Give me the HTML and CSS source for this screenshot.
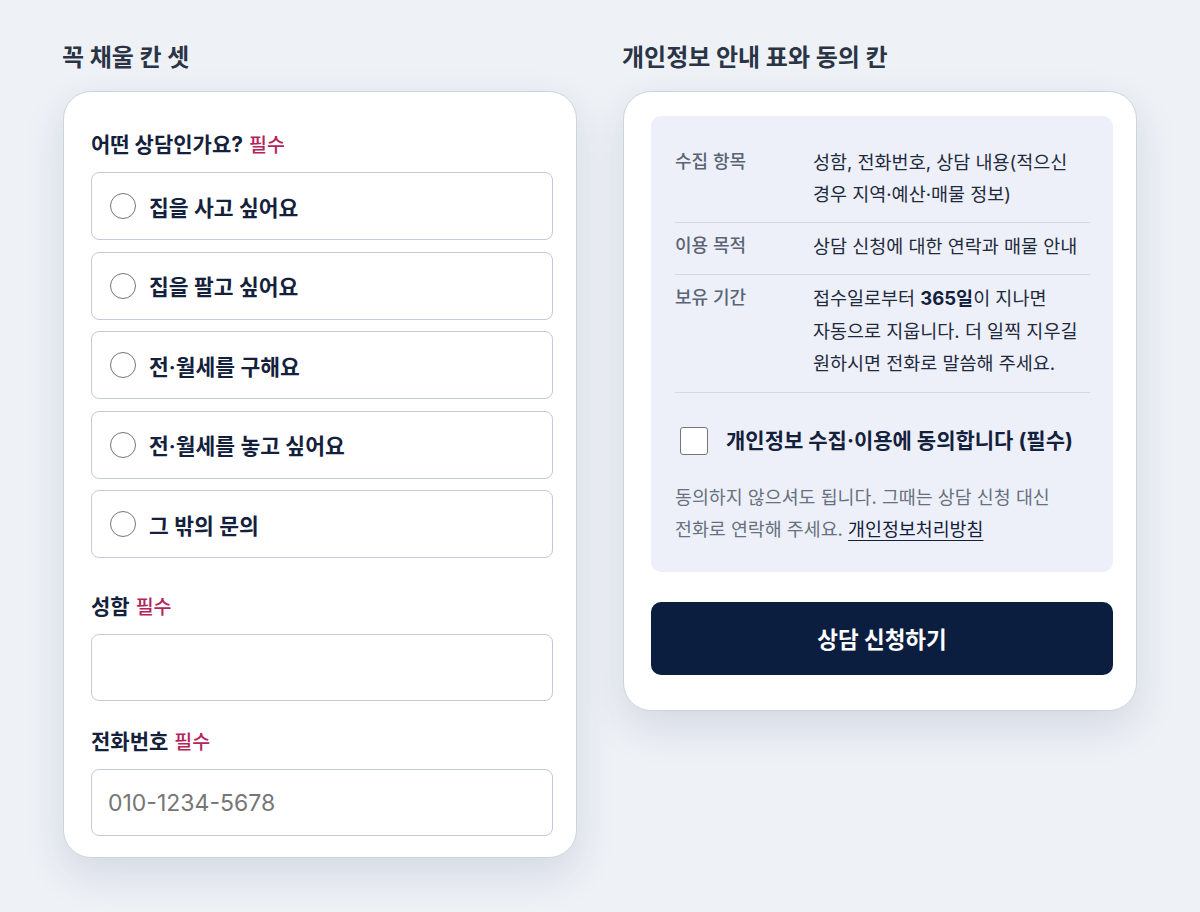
FILE: index.html
```html
<!DOCTYPE html>
<html lang="ko">
<head>
    <meta charset="UTF-8">
    <meta name="viewport" content="width=device-width, initial-scale=1.0">
    <title>상담 신청</title>
    <link rel="stylesheet" href="styles.css">
</head>
<body>

    <div class="page">
        <section class="column">
            <h2 class="section-title">꼭 채울 칸 셋</h2>

            <form class="card form-card">
                <div class="field field-type">
                    <p class="field-label">어떤 상담인가요? <span class="required">필수</span></p>
                    <div class="options">
                        <label class="option"><input type="radio" name="type"> <span>집을 사고 싶어요</span></label>
                        <label class="option"><input type="radio" name="type"> <span>집을 팔고 싶어요</span></label>
                        <label class="option"><input type="radio" name="type"> <span>전·월세를 구해요</span></label>
                        <label class="option"><input type="radio" name="type"> <span>전·월세를 놓고 싶어요</span></label>
                        <label class="option"><input type="radio" name="type"> <span>그 밖의 문의</span></label>
                    </div>
                </div>

                <div class="field">
                    <label class="field-label" for="nome">성함 <span class="required">필수</span></label>
                    <input class="text-input" type="text" id="nome" name="nome">
                </div>

                <div class="field">
                    <label class="field-label" for="tel">전화번호 <span class="required">필수</span></label>
                    <input class="text-input" type="tel" id="tel" name="tel" placeholder="010-1234-5678">
                </div>
            </form>
        </section>

        <section class="column">
            <h2 class="section-title">개인정보 안내 표와 동의 칸</h2>

            <div class="card consent-card">
                <div class="privacy-box">
                    <table class="privacy-table">
                        <tr>
                            <th>수집 항목</th>
                            <td>성함, 전화번호, 상담 내용(적으신 경우 지역·예산·매물 정보)</td>
                        </tr>
                        <tr>
                            <th>이용 목적</th>
                            <td>상담 신청에 대한 연락과 매물 안내</td>
                        </tr>
                        <tr>
                            <th>보유 기간</th>
                            <td>접수일로부터 <strong>365일</strong>이 지나면 자동으로 지웁니다. 더 일찍 지우길 원하시면 전화로 말씀해 주세요.</td>
                        </tr>
                    </table>

                    <label class="agree">
                        <input type="checkbox" name="agree">
                        <span>개인정보 수집·이용에 동의합니다 (필수)</span>
                    </label>

                    <p class="agree-note">동의하지 않으셔도 됩니다. 그때는 상담 신청 대신 전화로 연락해 주세요. <a href="#">개인정보처리방침</a></p>
                </div>

                <button type="button" class="button">상담 신청하기</button>
            </div>
        </section>
    </div>

</body>
</html>
```

FILE: styles.css
```css
body {
    font-family: "Inter", "Noto Sans CJK KR", sans-serif;
    background-color: #eef1f6;
    color: #14213d;
    margin: 0;
    padding: 0;
    word-break: keep-all;
}
.page {
    display: flex;
    gap: 46px;
    width: 1074px;
    margin: 0 auto;
    padding: 42px 0 55px;
    align-items: flex-start;
}
.column {
    width: 514px;
}
.section-title {
    font-size: 24px;
    font-weight: 700;
    color: #2b3445;
    margin: 0 0 17px -1px;
    line-height: 32px;
}
.card {
    background-color: white;
    border: 1px solid #cdd3e0;
    border-radius: 28px;
    box-shadow: 0 16px 40px rgba(40, 55, 90, 0.13);
}
.form-card {
    padding: 39px 23px 21px 27px;
    margin: 0;
}
.field {
    margin-bottom: 27px;
}
.field-type {
    margin-bottom: 35px;
}
.field:last-child {
    margin-bottom: 0;
}
.field-label {
    display: block;
    margin: 0 0 13px;
    font-size: 21px;
    font-weight: 700;
    line-height: 28px;
}
.required {
    color: #b3245a;
    font-size: 19.5px;
    font-weight: 500;
    margin-left: 1px;
}
.options {
    display: flex;
    flex-direction: column;
    gap: 11.5px;
}
.option {
    display: flex;
    align-items: center;
    gap: 13px;
    height: 66px;
    padding: 0 18px;
    border: 1px solid #c3cada;
    border-radius: 8px;
    font-size: 21.5px;
    font-weight: 600;
    cursor: pointer;
}
.option input {
    appearance: none;
    margin: 0;
    width: 26px;
    height: 26px;
    border: 1.5px solid #767676;
    border-radius: 50%;
    background: white;
    flex-shrink: 0;
}
.text-input {
    display: block;
    box-sizing: border-box;
    width: 100%;
    height: 67px;
    padding: 0 16px;
    border: 1px solid #c3cada;
    border-radius: 8px;
    font-family: inherit;
    font-size: 23px;
    color: #14213d;
}
.text-input::placeholder {
    color: #767676;
}
.consent-card {
    padding: 24px 23px 35px 27px;
}
.privacy-box {
    background-color: #edf0f8;
    border-radius: 10px;
    padding: 22px 23px 27px 24px;
}
.privacy-table {
    width: 100%;
    border-collapse: collapse;
    font-size: 18.5px;
    line-height: 32.5px;
}
.privacy-table th {
    width: 138px;
    text-align: left;
    vertical-align: top;
    font-size: 18px;
    font-weight: 500;
    color: #5a6475;
    padding: 7.5px 0 11px;
    border-bottom: 1px solid #d3d8e3;
}
.privacy-table td {
    color: #1f2a3d;
    padding: 7.5px 0 11px;
    border-bottom: 1px solid #d3d8e3;
}
.privacy-table tr:last-child th,
.privacy-table tr:last-child td {
    padding-bottom: 12px;
}
.privacy-table strong {
    font-weight: 700;
    color: #14213d;
}
.agree {
    display: flex;
    align-items: center;
    gap: 18px;
    margin: 34px 0 0 5px;
    font-size: 21px;
    font-weight: 700;
    line-height: 28px;
    cursor: pointer;
}
.agree input {
    appearance: none;
    margin: 0;
    width: 28px;
    height: 28px;
    border: 1.5px solid #767676;
    border-radius: 3px;
    background: white;
    flex-shrink: 0;
}
.agree-note {
    margin: 26px 0 0;
    font-size: 18.4px;
    line-height: 32px;
    color: #687080;
}
.agree-note a {
    color: #14213d;
    text-decoration: underline;
    text-underline-offset: 4px;
}
.button {
    display: block;
    width: 100%;
    height: 73px;
    margin-top: 30px;
    background-color: #0c1e40;
    color: white;
    border: none;
    border-radius: 10px;
    font-family: inherit;
    font-size: 22.5px;
    font-weight: 700;
    cursor: pointer;
}
```
